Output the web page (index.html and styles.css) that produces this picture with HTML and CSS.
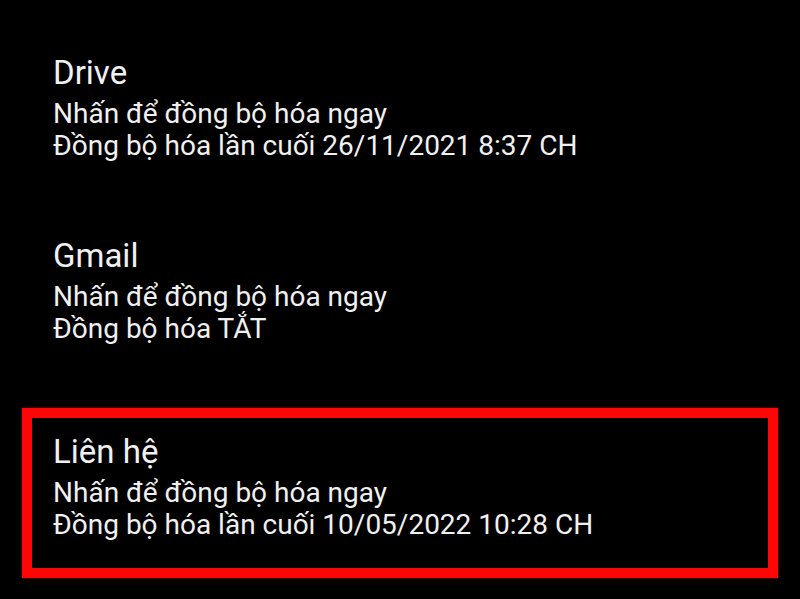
FILE: index.html
```html
<!DOCTYPE html>
<html lang="vi">
<head>
<meta charset="utf-8">
<title>Đồng bộ hóa tài khoản</title>
<link rel="stylesheet" href="styles.css">
</head>
<body>
<ul class="sync-list">
  <li class="sync-item">
    <div class="sync-title">Drive</div>
    <div class="sync-lines">
      <div class="sync-line">Nhấn để đồng bộ hóa ngay</div>
      <div class="sync-line">Đồng bộ hóa lần cuối 26/11/2021 8:37 CH</div>
    </div>
  </li>
  <li class="sync-item">
    <div class="sync-title">Gmail</div>
    <div class="sync-lines">
      <div class="sync-line">Nhấn để đồng bộ hóa ngay</div>
      <div class="sync-line">Đồng bộ hóa TẮT</div>
    </div>
  </li>
  <li class="sync-item sync-item--highlight">
    <div class="sync-title">Liên hệ</div>
    <div class="sync-lines">
      <div class="sync-line">Nhấn để đồng bộ hóa ngay</div>
      <div class="sync-line">Đồng bộ hóa lần cuối 10/05/2022 10:28 CH</div>
    </div>
  </li>
</ul>
</body>
</html>
```

FILE: styles.css
```css
html, body {
  margin: 0;
  padding: 0;
  background: #000;
}

body {
  width: 800px;
  height: 599px;
  overflow: hidden;
  font-family: Roboto, "Noto Sans", "Liberation Sans", sans-serif;
  color: #f0f0f0;
}

.sync-list {
  list-style: none;
  margin: 0;
  padding: 29px 0 0;
  display: flex;
  flex-direction: column;
}

.sync-item {
  margin: 0 22px;
  border: 10px solid transparent;
  padding: 14px 21px 26px;
}

.sync-item + .sync-item {
  margin-top: 13px;
}

.sync-item.sync-item--highlight {
  margin-top: 26px;
  border-color: #ff0606;
  box-shadow: 0 0 3px rgba(255, 0, 0, 0.5);
}

.sync-title {
  font-size: 33px;
  line-height: 40px;
  margin-bottom: 5px;
}

.sync-lines {
  padding-bottom: 1px;
}

.sync-line {
  font-size: 28px;
  line-height: 32px;
}
```
